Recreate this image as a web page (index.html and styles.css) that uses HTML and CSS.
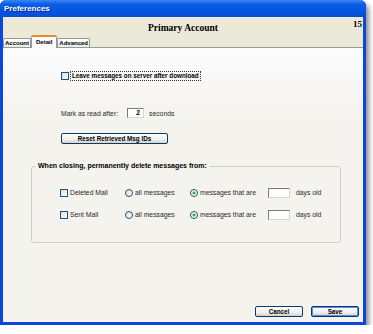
FILE: index.html
```html
<!DOCTYPE html>
<html lang="en">
<head>
    <meta charset="UTF-8">
    <title>Preferences</title>
    <link rel="stylesheet" href="styles.css">
</head>
<body>
    <div class="window">
        <div class="titlebar">Preferences</div>

        <div class="header">
            <div class="header-top">
                <span></span>
                <div class="account-title">Primary Account</div>
                <div class="count">15</div>
            </div>
            <div class="tabs">
                <span class="tab">Account</span>
                <span class="tab active">Detail</span>
                <span class="tab">Advanced</span>
            </div>
        </div>

        <div class="pane">
            <label class="check-row">
                <span class="checkbox"></span>
                <span class="focus-label">Leave messages on server after download</span>
            </label>

            <div class="mark-row">
                <span>Mark as read after:</span>
                <span class="field seconds-field">2</span>
                <span>seconds</span>
            </div>

            <button class="btn reset-btn">Reset Retrieved Msg IDs</button>

            <fieldset class="group">
                <legend>When closing, permanently delete messages from:</legend>
                <div class="delete-grid">
                    <label class="opt"><span class="checkbox"></span>Deleted Mail</label>
                    <label class="opt"><span class="radio"></span>all messages</label>
                    <label class="opt"><span class="radio checked"></span>messages that are</label>
                    <span class="field days-field"></span>
                    <span class="opt">days old</span>

                    <label class="opt"><span class="checkbox"></span>Sent Mail</label>
                    <label class="opt"><span class="radio"></span>all messages</label>
                    <label class="opt"><span class="radio checked"></span>messages that are</label>
                    <span class="field days-field"></span>
                    <span class="opt">days old</span>
                </div>
            </fieldset>

            <div class="footer">
                <button class="btn">Cancel</button>
                <button class="btn default">Save</button>
            </div>
        </div>
    </div>
</body>
</html>
```

FILE: styles.css
```css
* {
    margin: 0;
    padding: 0;
    box-sizing: border-box;
}

body {
    background: #ffffff;
    font-family: 'Liberation Sans', Arial, sans-serif;
    color: #2a2a2a;
}

.window {
    width: 366px;
    height: 325px;
    display: flex;
    flex-direction: column;
    border: 3px solid #0c46dc;
    border-top: none;
    border-radius: 6px 6px 0 0;
    background: #ece9d8;
    box-shadow: 3px 4px 5px rgba(0, 0, 0, 0.45);
}

.titlebar {
    height: 17px;
    margin: 0 -3px;
    padding-left: 4px;
    border-radius: 6px 6px 0 0;
    background: linear-gradient(#3c86f6, #0a5ee4 25%, #0554e0 70%, #0a4cd4);
    color: #fff;
    font-size: 8px;
    font-weight: bold;
    line-height: 17px;
    text-shadow: 1px 1px 0 #0a2a90;
}

/* header with title and tabs */
.header {
    height: 30px;
    display: flex;
    flex-direction: column;
    justify-content: space-between;
}

.header-top {
    display: grid;
    grid-template-columns: 1fr auto 1fr;
    padding-top: 2px;
}

.account-title {
    font-family: 'Liberation Serif', 'Times New Roman', serif;
    font-weight: bold;
    font-size: 9.5px;
    color: #000;
    padding-top: 4px;
}

.count {
    justify-self: end;
    padding-right: 1px;
    font-family: 'Liberation Serif', 'Times New Roman', serif;
    font-weight: bold;
    font-size: 9px;
    color: #000;
}

.tabs {
    display: flex;
    align-items: flex-end;
}

.tab {
    height: 9px;
    padding: 0 1px;
    border: 1px solid #919b9c;
    border-bottom: none;
    border-radius: 2px 2px 0 0;
    background: linear-gradient(#ffffff, #ecebe5);
    font-size: 6px;
    font-weight: bold;
    line-height: 8px;
    color: #000;
}

.tab.active {
    height: 13px;
    margin-bottom: -1px;
    position: relative;
    border-top: 2px solid #e68b2c;
    background: #fcfcfe;
    line-height: 10px;
    padding: 0 4px;
}

/* detail page */
.pane {
    flex: 1;
    display: flex;
    flex-direction: column;
    align-items: flex-start;
    border-top: 1px solid #919b9c;
    background: linear-gradient(#fcfcfe, #f4f3ee 70px);
    font-size: 6.8px;
}

.check-row {
    display: flex;
    align-items: center;
    gap: 2px;
    margin: 24px 0 0 58px;
}

.focus-label {
    outline: 1px dotted #333;
    font-weight: bold;
    font-size: 6.3px;
    line-height: 8px;
    padding: 0 1px;
    color: #000;
}

.checkbox {
    width: 8px;
    height: 8px;
    border: 1px solid #1c5180;
    background: linear-gradient(135deg, #dcdcd7, #ffffff);
    flex-shrink: 0;
}

.radio {
    width: 8px;
    height: 8px;
    border: 1px solid #1c5180;
    border-radius: 50%;
    background: linear-gradient(135deg, #dcdcd7, #ffffff);
    flex-shrink: 0;
}

.radio.checked {
    background: radial-gradient(circle, #21a121 0, #45c845 1.4px, #ffffff 1.8px);
}

.mark-row {
    display: flex;
    align-items: center;
    margin: 28px 0 0 58px;
}

.field {
    height: 10px;
    border: 1px solid;
    border-color: #7a7a7a #d8d5c8 #d8d5c8 #7a7a7a;
    background: #fff;
}

.seconds-field {
    width: 17px;
    margin: 0 5px 0 9px;
    text-align: right;
    padding-right: 3px;
    font-weight: bold;
    line-height: 8px;
    color: #000;
}

.btn {
    height: 11px;
    border: 1px solid #003c74;
    border-radius: 2px;
    background: linear-gradient(#ffffff, #f0efe9 60%, #d6d0c5);
    font-family: 'Liberation Sans', Arial, sans-serif;
    font-size: 6.3px;
    font-weight: bold;
    line-height: 9px;
    color: #000;
}

.reset-btn {
    width: 107px;
    margin: 15px 0 0 58px;
}

.group {
    width: 310px;
    margin: 18px 0 0 28px;
    padding: 0 0 22px 28px;
    border: 1px solid #d0d0bf;
    border-radius: 3px;
}

.group legend {
    margin-left: -24px;
    padding: 0 2px;
    font-size: 7px;
    font-weight: bold;
    line-height: 8px;
    color: #000;
}

.delete-grid {
    display: grid;
    grid-template-columns: 65px 65px 78px 28px auto;
    row-gap: 12px;
    padding-top: 18px;
    align-items: center;
}

.opt {
    display: flex;
    align-items: center;
    gap: 2px;
    line-height: 10px;
}

.days-field {
    width: 22px;
}

.footer {
    margin-top: auto;
    align-self: flex-end;
    display: flex;
    gap: 8px;
    padding: 0 4px 5px 0;
}

.footer .btn {
    width: 48px;
}

.btn.default {
    box-shadow: inset 0 0 0 1px #5b8ce8;
}
```
